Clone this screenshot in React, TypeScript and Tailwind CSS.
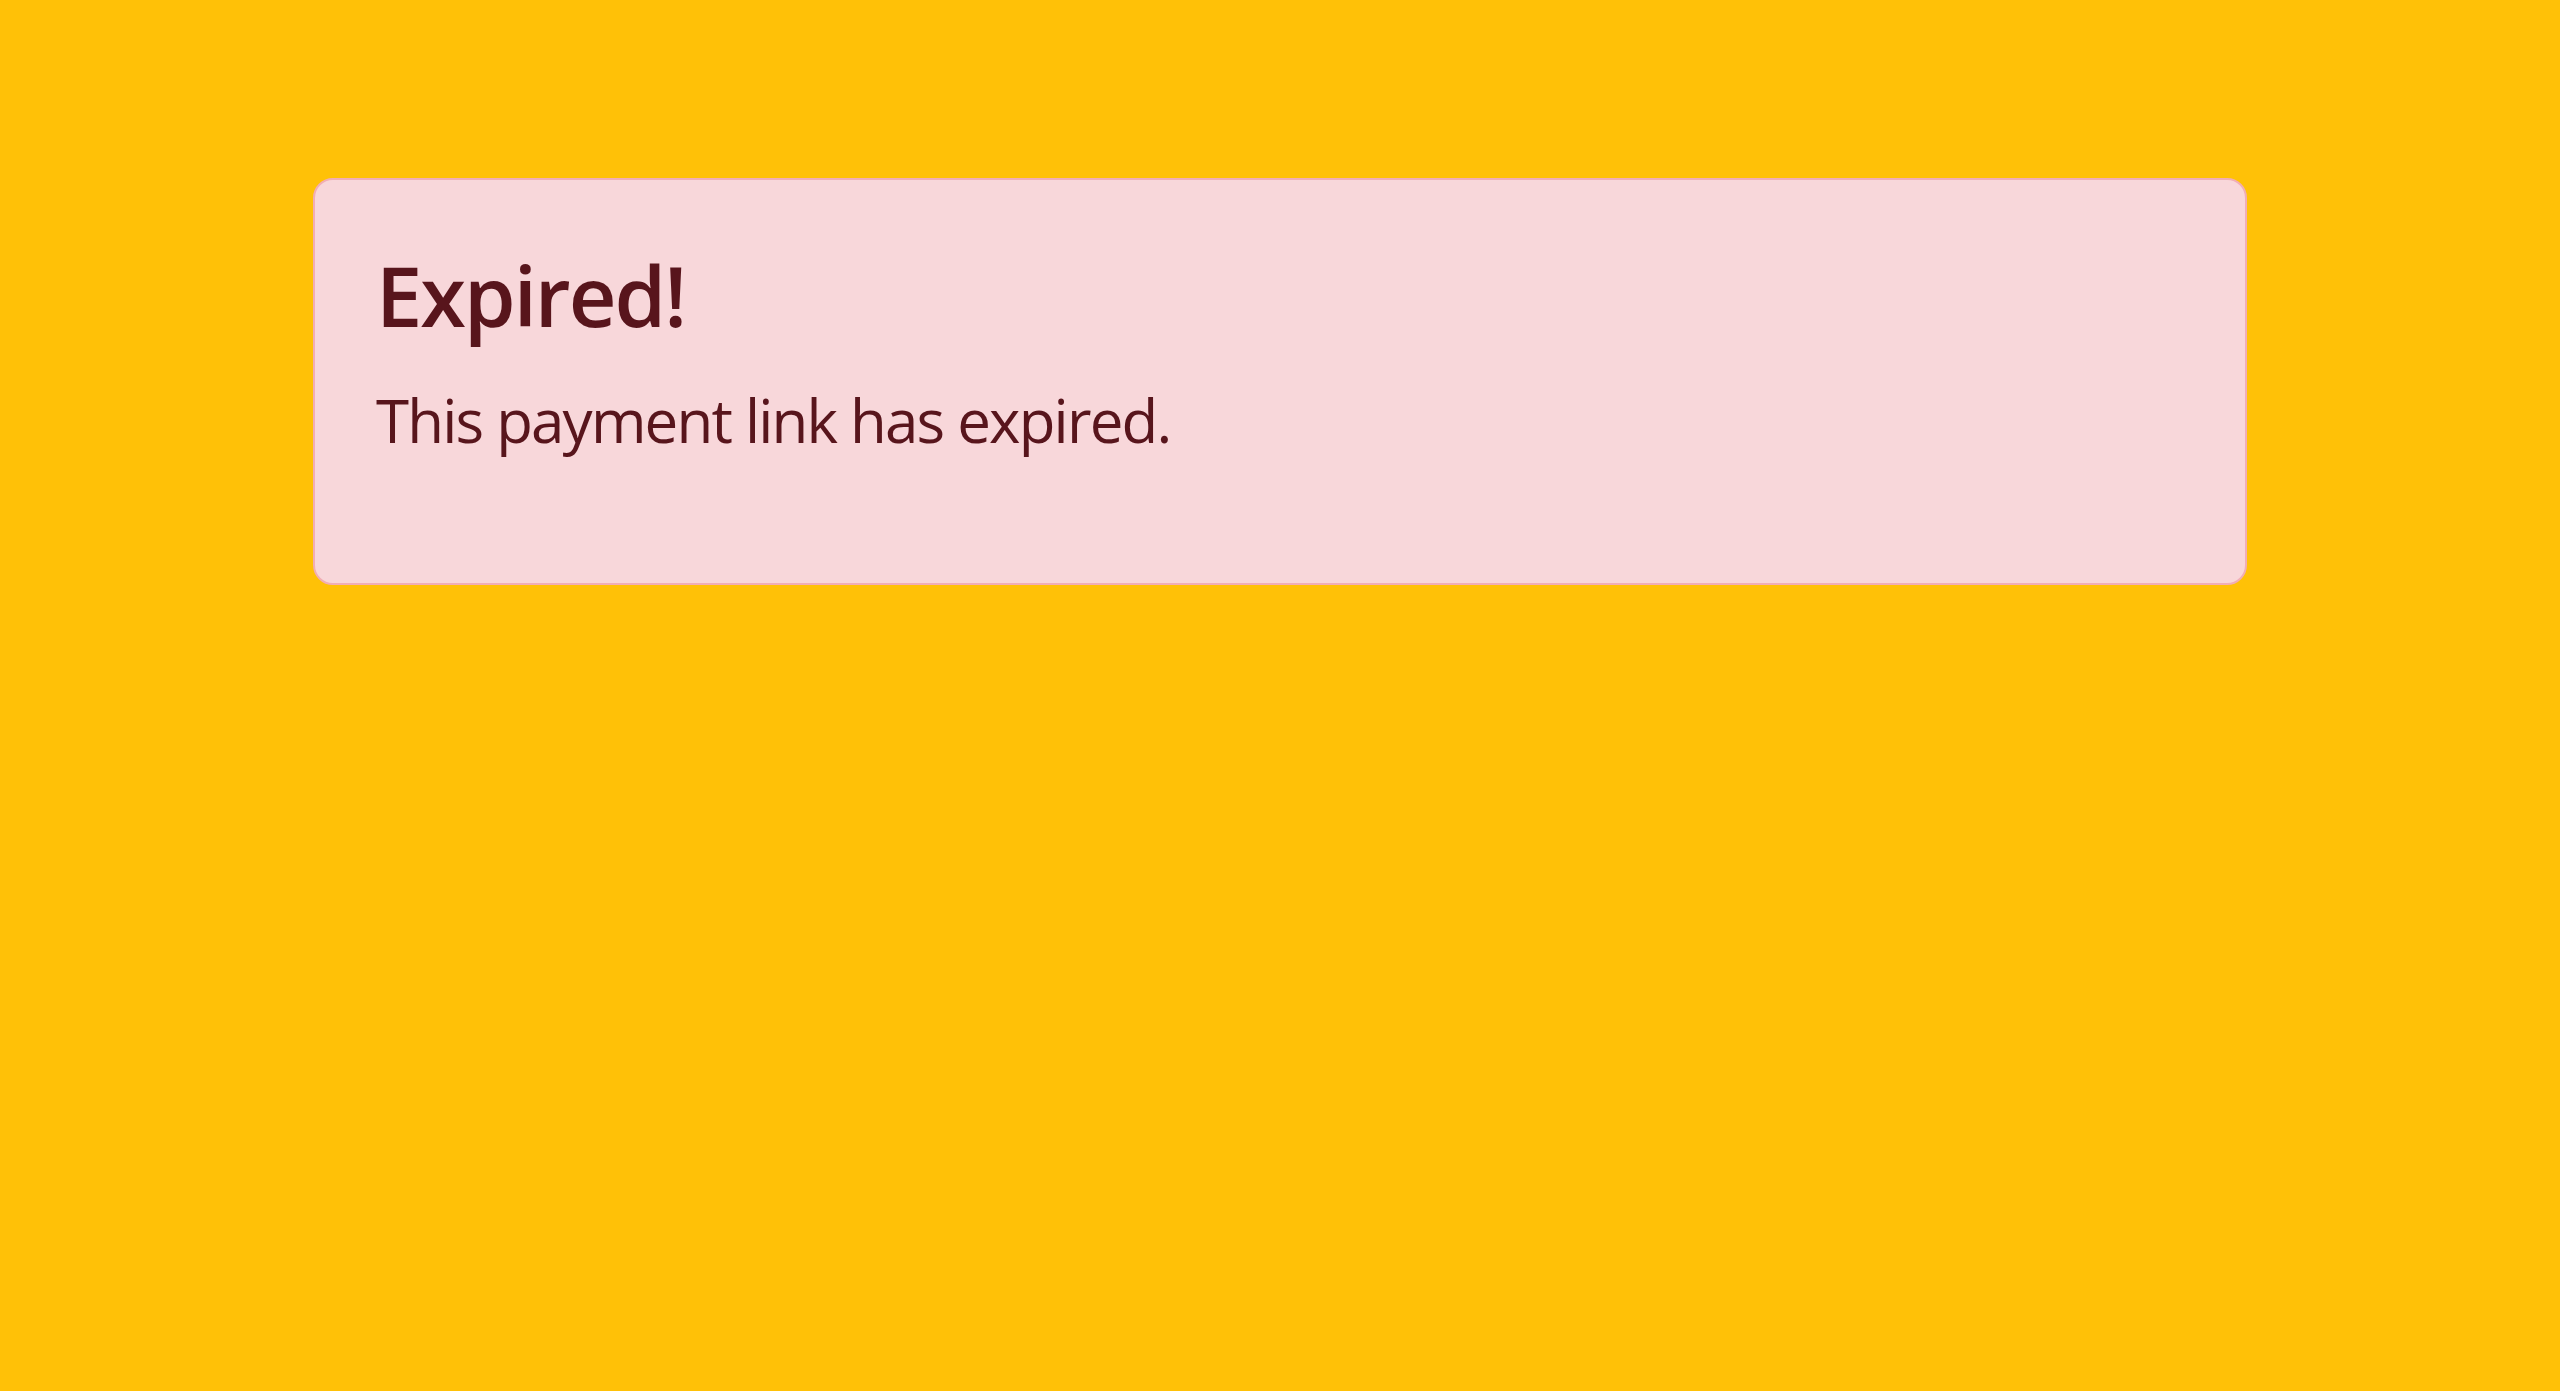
import React from 'react';

export default function App() {
  return (
    <main className="min-h-screen w-full bg-[#ffc107] pt-[178px] font-['Open_Sans',sans-serif]">
      {/* ALERT */}
      <div className="mx-auto w-[1934px] rounded-[20px] border-2 border-[#f1aeb5] bg-[#f8d7da] px-[61px] pt-[65px] pb-[57px] text-[#58151c]">
        <h4 className="mb-[30px] text-[83px] font-semibold leading-[100px] tracking-[-2px]">Expired!</h4>
        <p className="mb-[61px] text-[60px] leading-[90px] tracking-[-1.8px]">This payment link has expired.</p>
      </div>
    </main>
  );
}
